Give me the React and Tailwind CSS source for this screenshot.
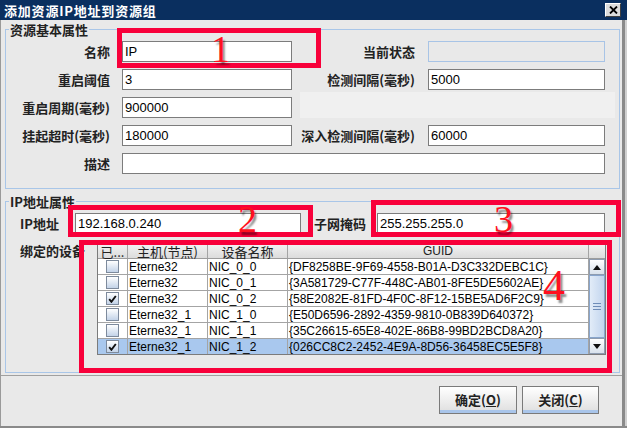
import React from "react";

const LAT = "font-['Liberation_Sans',Arial,sans-serif]";

function Label({ children, className = "" }) {
  return (
    <span className={`text-[13px] leading-[15px] font-bold text-[#222] whitespace-nowrap ${className}`}>
      {children}
    </span>
  );
}

function Field({ value = "", className = "", disabled = false }) {
  return (
    <input
      readOnly
      value={value}
      className={`h-[21px] pl-[2px] text-[13px] text-black outline-none ${LAT} ${
        disabled ? "border border-[#a8c4e6] bg-[#e9e9e9]" : "border border-[#7c7c7c] bg-white"
      } ${className}`}
    />
  );
}

function Checkbox({ checked }) {
  return (
    <div className="w-[13px] h-[13px] border border-[#7d8a9c] bg-linear-to-b from-white to-[#c3d3e8] flex items-center justify-center">
      {checked && (
        <svg width="9" height="8" viewBox="0 0 9 8">
          <path d="M1.2 4.2 L3.4 6.8 L7.8 1" stroke="#111" strokeWidth="1.9" fill="none" />
        </svg>
      )}
    </div>
  );
}

const rows = [
  [false, "Eterne32", "NIC_0_0", "{DF8258BE-9F69-4558-B01A-D3C332DEBC1C}"],
  [false, "Eterne32", "NIC_0_1", "{3A581729-C77F-448C-AB01-8FE5DE5602AE}"],
  [true, "Eterne32", "NIC_0_2", "{58E2082E-81FD-4F0C-8F12-15BE5AD6F2C9}"],
  [false, "Eterne32_1", "NIC_1_0", "{E50D6596-2892-4359-9810-0B839D640372}"],
  [false, "Eterne32_1", "NIC_1_1", "{35C26615-65E8-402E-86B8-99BD2BCD8A20}"],
  [true, "Eterne32_1", "NIC_1_2", "{026CC8C2-2452-4E9A-8D56-36458EC5E5F8}"],
];

function ScrollBtn({ down }) {
  return (
    <div className="h-[16px] border border-[#8e9cb0] bg-linear-to-b from-white to-[#d9e2ec] flex items-center justify-center">
      <svg width="8" height="5" viewBox="0 0 8 5">
        {down ? <path d="M0 0 H8 L4 5 Z" fill="#111" /> : <path d="M0 5 H8 L4 0 Z" fill="#111" />}
      </svg>
    </div>
  );
}

function Table() {
  return (
    <div className="w-[509px] h-[112px] border border-[#7b7b7b] bg-white flex flex-col">
      <div className="flex h-[15px] border-b border-[#9c9c9c] bg-linear-to-b from-[#f3f3f3] to-[#dcdcdc] text-[13px] leading-none text-[#222]">
        <div className="w-[30px] border-r border-[#a4a4a4] flex items-center justify-center">已...</div>
        <div className="w-[80px] border-r border-[#a4a4a4] flex items-center justify-center">主机(节点)</div>
        <div className="w-[80px] border-r border-[#a4a4a4] flex items-center justify-center">设备名称</div>
        <div className={`w-[301px] border-r border-[#a4a4a4] flex items-center justify-center text-[12px] ${LAT}`}>GUID</div>
        <div className="w-[16px]" />
      </div>
      <div className="flex h-[95px]">
        <div className={`w-[491px] overflow-hidden text-[12px] leading-none text-black ${LAT}`}>
          {rows.map(([c, host, nic, guid], i) => (
            <div
              key={i}
              className={`flex h-[16px] border-b border-[#a4a4a4] ${i === 5 ? "bg-[#a9c8ee]" : ""}`}
            >
              <div className="w-[30px] border-r border-[#a4a4a4] flex items-center justify-center">
                <Checkbox checked={c} />
              </div>
              <div className="w-[80px] border-r border-[#a4a4a4] pl-[1px] flex items-center">{host}</div>
              <div className="w-[80px] border-r border-[#a4a4a4] pl-[1px] flex items-center">{nic}</div>
              <div className="w-[301px] border-r border-[#a4a4a4] pl-[1px] flex items-center whitespace-nowrap overflow-hidden">
                {guid}
              </div>
            </div>
          ))}
        </div>
        <div className="w-[16px] flex flex-col bg-[#eef1f5]">
          <ScrollBtn />
          <div className="flex-1 border border-[#88a5cc] bg-linear-to-r from-[#e2ecf8] to-[#c2d5ee] flex flex-col items-center justify-center gap-[2px]">
            <div className="w-[8px] h-[1px] bg-[#6f8db8]" />
            <div className="w-[8px] h-[1px] bg-[#6f8db8]" />
            <div className="w-[8px] h-[1px] bg-[#6f8db8]" />
          </div>
          <ScrollBtn down />
        </div>
      </div>
    </div>
  );
}

function Button({ children, className = "" }) {
  return (
    <div
      className={`h-[28px] border border-[#7a7a7a] bg-linear-to-b from-white to-[#dedede] shadow-[inset_0_-3px_0_#a9c5ea] flex items-center justify-center text-[13px] font-bold text-[#222] ${className}`}
    >
      {children}
    </div>
  );
}

function RedBox({ className }) {
  return <div className={`absolute border-[5px] border-[#f8003a] ${className}`} />;
}

function Num({ children, className }) {
  return (
    <span
      className={`absolute font-['Liberation_Serif',serif] leading-none text-[#ff1020] [text-shadow:2px_3px_2px_rgba(0,0,0,0.45)] ${className}`}
    >
      {children}
    </span>
  );
}

export default function App() {
  return (
    <div className="relative w-[627px] h-[428px] overflow-hidden bg-[#e9e9e9] flex flex-col font-['Noto_Sans_CJK_SC',sans-serif] text-[#222]">
      {/* title bar */}
      <div className="h-[20px] shrink-0 bg-[#0a2f5f] flex items-center justify-between pl-[4px] pr-[6px]">
        <span className="text-white font-bold text-[13px] leading-none tracking-[0.8px]">添加资源IP地址到资源组</span>
        <div className="w-[16px] h-[14px] bg-[#dcdcdc] border border-t-white border-l-white border-r-[#404040] border-b-[#404040] flex items-center justify-center">
          <svg width="9" height="8" viewBox="0 0 9 8">
            <path d="M1 0.5 L8 7.5 M8 0.5 L1 7.5" stroke="#000" strokeWidth="1.8" />
          </svg>
        </div>
      </div>

      <div className="flex flex-1 min-h-0">
        <div className="w-[622px] border-l border-[#9a9a9a] flex flex-col">
          {/* group 1 */}
          <fieldset className="ml-[4px] mt-[1px] w-[615px] border border-[#a9c6e8] pb-[14px]">
            <legend className="ml-[3px] px-[1px] text-[13px] leading-[17px] font-bold text-[#222]">资源基本属性</legend>
            <div className="pt-[3px] flex flex-col gap-[7px]">
              <div className="flex items-center h-[21px]">
                <Label className="w-[104px] text-right">名称</Label>
                <Field className="ml-[12px] w-[170px]" value="IP" />
                <Label className="w-[123px] text-right">当前状态</Label>
                <Field className="ml-[13px] w-[177px]" disabled />
              </div>
              <div className="flex items-center h-[21px]">
                <Label className="w-[104px] text-right">重启阈值</Label>
                <Field className="ml-[12px] w-[170px]" value="3" />
                <Label className="w-[123px] text-right">检测间隔(毫秒)</Label>
                <Field className="ml-[13px] w-[177px]" value="5000" />
              </div>
              <div className="flex items-center h-[21px]">
                <Label className="w-[104px] text-right">重启周期(毫秒)</Label>
                <Field className="ml-[12px] w-[170px]" value="900000" />
                <div className="self-end ml-[8px] w-[315px] h-[26px] bg-[#f0f0f0]" />
              </div>
              <div className="flex items-center h-[21px]">
                <Label className="w-[104px] text-right">挂起超时(毫秒)</Label>
                <Field className="ml-[12px] w-[170px]" value="180000" />
                <Label className="w-[123px] text-right">深入检测间隔(毫秒)</Label>
                <Field className="ml-[13px] w-[177px]" value="60000" />
              </div>
              <div className="flex items-center h-[21px]">
                <Label className="w-[104px] text-right">描述</Label>
                <Field className="ml-[12px] w-[483px]" />
              </div>
            </div>
          </fieldset>

          {/* group 2 */}
          <fieldset className="ml-[4px] mt-[4px] w-[615px] border border-[#a9c6e8] pb-[17px]">
            <legend className="ml-[3px] px-[1px] text-[13px] leading-[17px] font-bold text-[#222]">IP地址属性</legend>
            <div className="pt-[3px] flex items-center h-[24px]">
              <Label className="ml-[14px] w-[55px]">IP地址</Label>
              <Field className="w-[226px]" value="192.168.0.240" />
              <Label className="ml-[13px] w-[63px]">子网掩码</Label>
              <Field className="w-[228px]" value="255.255.255.0" />
            </div>
            <div className="mt-[9px] flex items-start">
              <Label className="ml-[14px] w-[77px]">绑定的设备</Label>
              <Table />
            </div>
          </fieldset>

          <div className="mt-[2px] border-t border-[#a0a0a0]" />

          <div className="mt-[10px] flex justify-end gap-[5px] pr-[23px]">
            <Button className="w-[78px]">
              确定(<span className="underline">O</span>)
            </Button>
            <Button className="w-[77px]">
              关闭(<span className="underline">C</span>)
            </Button>
          </div>
        </div>
        <div className="w-[5px] border-l-[3px] border-[#8a8a8a] bg-[#d0d0d0]" />
      </div>
      <div className="h-[2px] shrink-0 bg-[#8a8a8a]" />

      {/* annotations */}
      <RedBox className="left-[117px] top-[28px] w-[204px] h-[40px]" />
      <RedBox className="left-[68px] top-[205px] w-[245px] h-[32px]" />
      <RedBox className="left-[371px] top-[200px] w-[250px] h-[37px]" />
      <RedBox className="left-[79px] top-[240px] w-[533px] h-[133px]" />
      <Num className="left-[211px] top-[30px] text-[38px]">1</Num>
      <Num className="left-[238px] top-[200px] text-[38px]">2</Num>
      <Num className="left-[494px] top-[200px] text-[38px]">3</Num>
      <Num className="left-[543px] top-[264px] text-[44px]">4</Num>
    </div>
  );
}
